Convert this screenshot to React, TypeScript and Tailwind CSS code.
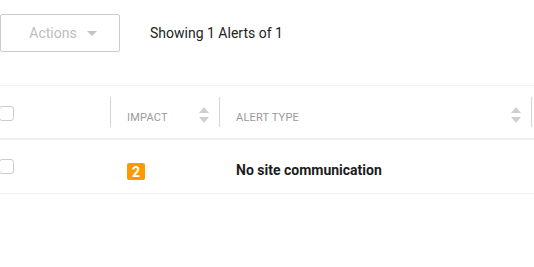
import { ReactNode } from "react";

function SortIcon() {
  return (
    <svg width="10" height="16" viewBox="0 0 10 16" className="shrink-0">
      <path d="M5 0 L10 6 L0 6 Z" fill="#cfcfcf" />
      <path d="M5 16 L10 10 L0 10 Z" fill="#cfcfcf" />
    </svg>
  );
}

function Checkbox() {
  return <span className="block w-[15px] h-[15px] border border-[#cccccc] rounded-[3px] bg-white" />;
}

function Divider() {
  return <span className="block w-px h-[30px] bg-[#d4d4d4]" />;
}

function HeaderCell({ label, width }: { label: string; width: string }) {
  return (
    <div className={`flex items-center h-full ${width}`}>
      <div className="flex-1 flex items-center justify-between pl-[16px] pr-[10px]">
        <span className="text-[11px] text-[#9a9a9a] uppercase mt-[12px] tracking-[0.2px]">{label}</span>
        <span className="mt-[6px]">
          <SortIcon />
        </span>
      </div>
      <Divider />
    </div>
  );
}

function Cell({ children, width }: { children: ReactNode; width: string }) {
  return <div className={`flex items-center h-full pl-[16px] ${width}`}>{children}</div>;
}

export default function App() {
  return (
    <div className="w-[534px] h-[267px] bg-white overflow-hidden" style={{ fontFamily: "Roboto, sans-serif" }}>
      <div className="flex items-center pt-[14px]">
        <button
          type="button"
          className="w-[120px] h-[38px] border border-[#cccccc] rounded-[2px] flex items-center justify-center gap-[10px] text-[14px] text-[#bdbdbd] pl-[6px]"
        >
          Actions
          <svg width="10" height="5" viewBox="0 0 10 5">
            <path d="M0 0 L10 0 L5 5 Z" fill="#c4c4c4" />
          </svg>
        </button>
        <span className="ml-[30px] text-[14px] text-[#222222]">Showing 1 Alerts of 1</span>
      </div>

      <div className="mt-[33px] border-t border-[#f3f3f3]">
        <div className="flex items-center h-[54px] border-b-2 border-[#efefef]">
          <div className="flex items-center justify-between h-full w-[111px]">
            <span className="-ml-[1px] mt-[2px]">
              <Checkbox />
            </span>
            <Divider />
          </div>
          <HeaderCell label="Impact" width="w-[109px]" />
          <HeaderCell label="Alert Type" width="w-[312px]" />
        </div>
        <div className="flex items-center h-[54px] border-b border-[#efefef]">
          <div className="flex items-center h-full w-[111px]">
            <span className="-ml-[1px]">
              <Checkbox />
            </span>
          </div>
          <Cell width="w-[109px]">
            <span className="mt-[10px] w-[18px] h-[17px] rounded-[2px] bg-[#ff9900] text-white text-[14px] font-bold flex items-center justify-center leading-none">
              2
            </span>
          </Cell>
          <Cell width="w-[312px]">
            <span className="mt-[8px] text-[14px] font-bold text-[#1c1c1c]">No site communication</span>
          </Cell>
        </div>
      </div>
    </div>
  );
}
